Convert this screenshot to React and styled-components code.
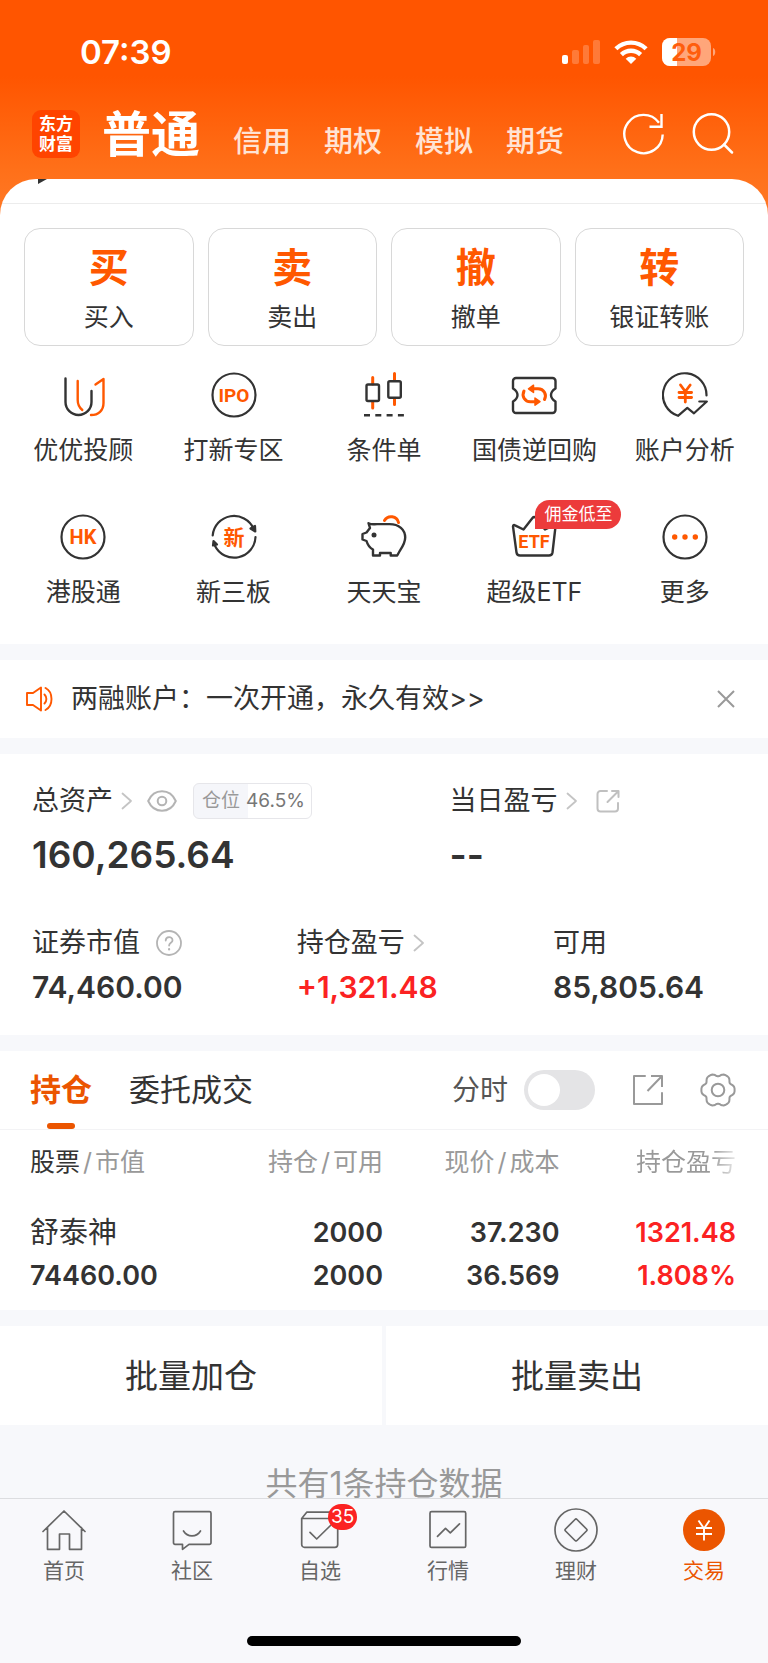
import React, { useState } from "react";
import styled, { createGlobalStyle } from "styled-components";

const ORANGE = "#ff5800";
const DEEP_ORANGE = "#eb5500";
const INK = "#333333";
const RED = "#fb2222";

const GlobalStyle = createGlobalStyle`
  * {
    box-sizing: border-box;
  }
  body {
    margin: 0;
    background: #f7f8fb;
    color: ${INK};
    font-family: Inter, "Noto Sans CJK SC", sans-serif;
  }
  button {
    padding: 0;
    border: none;
    background: none;
    color: inherit;
    font: inherit;
    cursor: pointer;
  }
  a {
    color: inherit;
    text-decoration: none;
  }
  svg {
    display: block;
    flex: none;
  }
`;

const Screen = styled.div`
  display: flex;
  flex-direction: column;
  height: 100vh;
  background: linear-gradient(#ff5500 76px, #ff7019 170px, #ff7a28 220px);
`;

/* header */

const StatusBar = styled.div`
  display: flex;
  align-items: center;
  justify-content: space-between;
  padding: 32px 52px 0 80px;
  color: white;
`;

const Time = styled.span`
  font-size: 33px;
  line-height: 40px;
  font-weight: 600;
`;

const StatusIcons = styled.div`
  display: flex;
  align-items: center;
  gap: 14px;
`;

const NavBar = styled.header`
  display: flex;
  align-items: center;
  height: 107px;
  padding: 16px 34px 0 32px;
  flex: none;
  color: white;
`;

const Logo = styled.a`
  display: flex;
  flex-direction: column;
  align-items: center;
  justify-content: center;
  width: 48px;
  height: 48px;
  border-radius: 9px;
  background: #ff4400;
  font-size: 17px;
  line-height: 20px;
  font-weight: 700;
`;

const AccountTabs = styled.nav`
  display: flex;
  align-items: baseline;
  gap: 33px;
  margin-left: 22px;
  padding-top: 10px;
`;

const AccountTab = styled.button`
  font-size: ${(props) => (props.$active ? "49px" : "29px")};
  line-height: 64px;
  font-weight: ${(props) => (props.$active ? 700 : 500)};
  opacity: ${(props) => (props.$active ? 1 : 0.82)};
`;

const NavActions = styled.div`
  display: flex;
  gap: 27px;
  margin-left: auto;
`;

/* scrolling sheet */

const Sheet = styled.main`
  flex: 1;
  min-height: 0;
  overflow-x: hidden;
  overflow-y: auto;
  scrollbar-width: none;
  border-radius: 36px 36px 0 0;
  background: #f7f8fb;
`;

const Section = styled.section`
  background: white;
  margin-bottom: 16px;
`;

const SheetTop = styled.div`
  height: 25px;
  padding-left: 38px;
  border-bottom: 1px solid #ececec;
`;

const TradeRow = styled.div`
  display: grid;
  grid-template-columns: repeat(4, 1fr);
  gap: 14px;
  padding: 24px 24px 0;
`;

const TradeCard = styled.button`
  display: flex;
  flex-direction: column;
  align-items: center;
  gap: 8px;
  height: 118px;
  padding-top: 14px;
  border: 1px solid #d8d8d8;
  border-radius: 16px;
`;

const TradeGlyph = styled.span`
  color: ${ORANGE};
  font-size: 40px;
  line-height: 50px;
  font-weight: 700;
`;

const Label = styled.span`
  font-size: 25px;
  line-height: 32px;
  white-space: nowrap;
`;

const ToolGrid = styled.div`
  display: grid;
  grid-template-columns: repeat(5, 1fr);
  row-gap: 48px;
  padding: 26px 8px 36px;
`;

const Tool = styled.a`
  display: flex;
  flex-direction: column;
  align-items: center;
  gap: 16px;
`;

const ToolIcon = styled.span`
  position: relative;
`;

const Promo = styled.span`
  position: absolute;
  left: 24px;
  top: -14px;
  padding: 0 9px;
  border-radius: 15px 15px 15px 0;
  background: #ec3b3b;
  color: white;
  font-size: 17px;
  line-height: 29px;
  white-space: nowrap;
`;

const Notice = styled(Section)`
  display: flex;
  align-items: center;
  height: 78px;
  padding: 0 32px 0 25px;
`;

const NoticeText = styled.a`
  flex: 1;
  margin-left: 16px;
  font-size: 27px;
  line-height: 36px;
`;

/* assets */

const Assets = styled(Section)`
  padding: 29px 40px 28px 32px;
`;

const AssetTop = styled.div`
  display: grid;
  grid-template-columns: 3fr 2fr;
`;

const AssetBottom = styled.div`
  display: grid;
  grid-template-columns: 62fr 60fr 41fr;
  margin-top: 46px;
`;

const AssetLabel = styled.div`
  display: flex;
  align-items: center;
  gap: ${(props) => props.$gap || "8px"};
  font-size: 27px;
  line-height: 36px;
  white-space: nowrap;
`;

const IconButton = styled.button`
  margin-left: ${(props) => props.$left || "0"};
`;

const Total = styled.div`
  margin-top: 12px;
  font-size: 37px;
  line-height: 48px;
  font-weight: 600;
`;

const Amount = styled.div`
  margin-top: 6px;
  color: ${(props) => (props.$up ? RED : INK)};
  font-size: 30px;
  line-height: 40px;
  font-weight: 600;
`;

const Ratio = styled.span`
  display: flex;
  align-items: center;
  gap: 6px;
  height: 36px;
  margin-left: 8px;
  padding: 0 6px 0 8px;
  border: 1px solid #e6e6ea;
  border-radius: 6px;
  color: #777777;
  font-size: 19px;
  line-height: 24px;
`;

const RatioName = styled.span`
  color: #999999;
`;

/* holdings */

const TabHeader = styled.div`
  display: flex;
  align-items: center;
  height: 79px;
  padding: 0 32px 0 30px;
  border-bottom: 1px solid #f3f3f5;
`;

const HoldingTab = styled.button`
  display: flex;
  flex-direction: column;
  align-items: center;
  height: 78px;
  margin-right: 37px;
  padding-top: 6px;
  color: ${(props) => (props.$active ? DEEP_ORANGE : INK)};
  font-size: 31px;
  line-height: 66px;
  font-weight: ${(props) => (props.$active ? 700 : 400)};

  &::after {
    content: "";
    width: 28px;
    height: 6px;
    border-radius: 3px;
    background: ${(props) => (props.$active ? DEEP_ORANGE : "transparent")};
  }
`;

const SwitchLabel = styled.label`
  display: flex;
  align-items: center;
  gap: 16px;
  margin-left: auto;
  color: #555555;
  font-size: 28px;
  line-height: 40px;
`;

const Switch = styled.input`
  appearance: none;
  width: 71px;
  height: 40px;
  margin: 0;
  padding: 4px;
  border-radius: 20px;
  background: #e4e4e6;
  cursor: pointer;

  &::before {
    content: "";
    display: block;
    width: 32px;
    height: 32px;
    border-radius: 50%;
    background: white;
  }

  &:checked {
    background: ${DEEP_ORANGE};
  }

  &:checked::before {
    margin-left: auto;
  }
`;

const TableWrap = styled.div`
  padding: 0 32px 13px 30px;
`;

const Table = styled.table`
  width: 100%;
  table-layout: fixed;
  border-collapse: collapse;
  text-align: right;

  th {
    height: 64px;
    padding: 0;
    color: #999999;
    font-size: 25px;
    line-height: 32px;
    font-weight: 400;
    white-space: nowrap;
  }

  td {
    padding: 17px 0 0;
    font-size: 27px;
    line-height: 43px;
    font-weight: 600;
  }

  th:first-child,
  td:first-child {
    text-align: left;
  }
`;

const Dark = styled.span`
  color: ${INK};
`;

const Slash = styled.span`
  margin: 0 3px;
`;

const Fading = styled.span`
  background: linear-gradient(90deg, #999999 75%, #e8e8e8);
  background-clip: text;
  color: transparent;
`;

const Line = styled.span`
  display: block;
  color: ${(props) => (props.$up ? RED : INK)};
`;

const StockName = styled(Line)`
  font-size: 29px;
  font-weight: 400;
`;

const BatchRow = styled.div`
  display: grid;
  grid-template-columns: 1fr 1fr;
  gap: 4px;
`;

const BatchButton = styled.button`
  height: 99px;
  background: white;
  font-size: 33px;
  line-height: 48px;
`;

const Hint = styled.p`
  margin: 0;
  padding: 38px 0;
  color: #999999;
  font-size: 32px;
  line-height: 42px;
  text-align: center;
`;

/* bottom bar */

const BottomBar = styled.footer`
  flex: none;
  padding: 9px 0 17px;
  border-top: 1px solid #dcdde0;
  background: #f8f8fb;
`;

const BottomNav = styled.nav`
  display: grid;
  grid-template-columns: repeat(6, 1fr);
`;

const BottomItem = styled.a`
  display: flex;
  flex-direction: column;
  align-items: center;
  gap: 6px;
  color: ${(props) => (props.$active ? DEEP_ORANGE : "#666666")};
  font-size: 21px;
  line-height: 26px;
`;

const Count = styled.span`
  position: absolute;
  left: 30px;
  top: -4px;
  padding: 0 3px;
  border-radius: 13px;
  background: ${RED};
  color: white;
  font-size: 19px;
  line-height: 26px;
`;

const HomeIndicator = styled.div`
  width: 274px;
  height: 10px;
  margin: 52px auto 0;
  border-radius: 5px;
  background: black;
`;

/* icons */

const Svg = ({ w = 46, h = w, sw = 2.4, color = INK, children }) => (
  <svg
    width={w}
    height={h}
    viewBox={`0 0 ${w} ${h}`}
    fill="none"
    stroke={color}
    strokeWidth={sw}
    strokeLinecap="round"
    strokeLinejoin="round"
    aria-hidden="true"
  >
    {children}
  </svg>
);

const IconText = ({ x = 23, y, size, children }) => (
  <text
    x={x}
    y={y}
    fill={ORANGE}
    stroke="none"
    textAnchor="middle"
    fontFamily='Roboto, "Noto Sans CJK SC", sans-serif'
    fontSize={size}
    fontWeight="700"
  >
    {children}
  </text>
);

const Signal = () => (
  <svg width="38" height="24" viewBox="0 0 38 24" fill="white" aria-hidden="true">
    <rect x="0" y="15" width="6" height="9" rx="2" />
    <g opacity="0.22">
      <rect x="10" y="10" width="7" height="14" rx="2" />
      <rect x="21" y="5" width="6" height="19" rx="2" />
      <rect x="31" y="0" width="7" height="24" rx="2" />
    </g>
  </svg>
);

const Wifi = () => (
  <svg width="34" height="24" viewBox="0 0 34 24" fill="none" stroke="white" strokeWidth="4.4" aria-hidden="true">
    <path d="M1.9 8.8a21.6 21.6 0 0 1 30.2 0" />
    <path d="M7.4 14.6a13.8 13.8 0 0 1 19.2 0" />
    <path d="M17 24l-5.3-5.3a7.6 7.6 0 0 1 10.6 0z" fill="white" stroke="none" />
  </svg>
);

const Battery = () => (
  <svg width="54" height="28" viewBox="0 0 54 28" aria-hidden="true">
    <rect width="49" height="28" rx="8" fill="white" opacity="0.48" />
    <path d="M8 0h7v28H8a8 8 0 0 1-8-8V8a8 8 0 0 1 8-8z" fill="white" />
    <path d="M51 10c3 1 3 7 0 8z" fill="white" opacity="0.48" />
    <text x="24.5" y="22.5" textAnchor="middle" fill="#ff5d0c" fontSize="24" fontWeight="700">
      29
    </text>
  </svg>
);

const Refresh = () => (
  <Svg w={42} sw={2.4} color="white">
    <path d="M36 9.700A19.200 19.200 0 1 0 39.700 21.500" strokeLinecap="butt" />
    <path d="M38.500 1v12.800H26.500" strokeLinecap="butt" strokeLinejoin="miter" />
  </Svg>
);

const Search = () => (
  <Svg w={42} sw={2.5} color="white">
    <circle cx="19.5" cy="19" r="17.7" />
    <path d="M32 31.5l8 8" />
  </Svg>
);

const YouIcon = () => (
  <Svg>
    <path d="M5.5 6.5V30a13 13 0 0 0 26 0V19" />
    <g stroke={ORANGE}>
      <path d="M17.7 9v19c0 4.500 1.500 7.500 4.600 10" />
      <path d="M35.5 12.5l8-5.500v24c0 7.500-5 12-12.500 12" />
    </g>
  </Svg>
);

const IpoIcon = () => (
  <Svg sw={2.2}>
    <circle cx="23" cy="23" r="21.5" />
    <IconText y={29.5} size={19}>IPO</IconText>
  </Svg>
);

const CandleIcon = () => (
  <Svg>
    <path d="M11.7 5.500v6.500M11.700 30v6M33.500 1.500v7M33.500 26.500v6" stroke={ORANGE} strokeWidth="3" />
    <rect x="5.5" y="12.5" width="12.5" height="16.5" rx="1.5" />
    <rect x="27.3" y="9.3" width="12.5" height="16.5" rx="1.5" />
    <path d="M3 43.2h40" strokeDasharray="6 5.3" strokeLinecap="butt" />
  </Svg>
);

const TicketIcon = () => (
  <Svg>
    <path d="M5 6h36.500a3 3 0 0 1 3 3v7.500c-2.500 1.500-4.500 3.500-4.500 6.500s2 5 4.500 6.500V38a3 3 0 0 1-3 3H5a3 3 0 0 1-3-3v-8.500c2.500-1.500 4.500-3.500 4.500-6.500S4.500 18 2 16.500V9a3 3 0 0 1 3-3z" />
    <g stroke={ORANGE} strokeWidth="3">
      <path d="M22 16.800h5c6 0 9 5.700 6.500 10.700" />
      <path d="M24.500 29.700h-5c-6 0-9-5.700-6.500-10.700" />
      <path d="M22.500 13.200v7.200l-5-3.600z" fill={ORANGE} strokeWidth="1.5" />
      <path d="M24 26v7.200l5-3.600z" fill={ORANGE} strokeWidth="1.5" />
    </g>
  </Svg>
);

const AnalysisIcon = () => (
  <Svg sw={2.2}>
    <path d="M44.500 23.500A21.800 21.800 0 1 0 16 43.800l9.300-8 6.700 5.500 12.800-11.800h-7.500" />
    <path d="M18.500 13l4.800 6.500L28.200 13M23.300 19.500V30M17 20.500h12.600M17 25.500h12.600" stroke={ORANGE} strokeWidth="2.8" />
  </Svg>
);

const HkIcon = () => (
  <Svg sw={2.2}>
    <circle cx="23" cy="23" r="21.5" />
    <IconText y={30} size={20}>HK</IconText>
  </Svg>
);

const NewIcon = () => (
  <Svg sw={2.2}>
    <path d="M1.700 21.500A21.400 21.400 0 0 1 42.500 14.500" />
    <path d="M44.500 23A21.400 21.400 0 0 1 3.800 31.500" />
    <path d="M39.500 14.500l4.500-2.500.3 5.500z" fill={INK} />
    <path d="M2 31.500l.5-4.500 3.500 3.500z" fill={INK} />
    <IconText y={30.5} size={21}>新</IconText>
  </Svg>
);

const PiggyIcon = () => (
  <Svg>
    <path d="M7.500 9.200c3.500 1.800 5.500.8 9 .9h12c9.500 0 15.700 5.500 15.700 13.500 0 5.500-2.500 9-5.500 13.400l-2.500 4.500h-6.500v-2.500H19v2.500h-7v-6c-3.500-1.800-5.500-5-6.500-8.500l-4-1.500v-5.500l4-1.500 3.500-4.500z" />
    <path d="M23.500 6.500c3.500-6 12.500-4.500 14 2" stroke={ORANGE} strokeWidth="3" />
    <circle cx="13" cy="21" r="2.5" fill={INK} stroke="none" />
  </Svg>
);

const EtfIcon = () => (
  <Svg>
    <path d="M2 12.500c0-1.500 1-1.800 2-1.200l8.500 4.200L21.500 4c1-1.300 2.500-1.300 3.500 0l9 11.500 8.500-4.200c1-.5 2 0 2 1.200l-3 26c-.3 2-1.500 3-3.500 3h-29c-2 0-3.200-1-3.500-3z" />
    <IconText y={33.5} size={18}>ETF</IconText>
  </Svg>
);

const MoreIcon = () => (
  <Svg sw={2.2}>
    <circle cx="23" cy="23" r="21.5" />
    <g fill={ORANGE} stroke="none">
      <circle cx="12.7" cy="23" r="2.7" />
      <circle cx="23" cy="23" r="2.7" />
      <circle cx="33.3" cy="23" r="2.7" />
    </g>
  </Svg>
);

const Speaker = () => (
  <Svg w={30} h={26} sw={1.9} color={ORANGE}>
    <path d="M2 7h6l8-5.500v23L8 19H2zM19.500 8.500c2.500 2.500 2.500 6.500 0 9M20.500 2c8 4 8 18 0 22" />
  </Svg>
);

const Close = () => (
  <Svg w={20} sw={2} color="#999999">
    <path d="M2 2l16 16M18 2L2 18" strokeLinecap="butt" />
  </Svg>
);

const Chevron = () => (
  <Svg w={12} h={18} sw={1.8} color="#c4c4c4">
    <path d="M1.500 1.500L10 9l-8.500 7.500" />
  </Svg>
);

const Eye = () => (
  <Svg w={30} h={22} sw={2} color="#b4b4b4">
    <path d="M1.200 11C7-2 23-2 28.800 11 23 24 7 24 1.200 11z" />
    <circle cx="15" cy="11" r="4.3" />
  </Svg>
);

const Question = () => (
  <Svg w={26} sw={1.8} color="#b4b4b4">
    <circle cx="13" cy="13" r="12" />
    <path d="M9.700 10.500c0-4.500 6.800-4.500 6.800-.3 0 2.600-3.400 2.600-3.400 5.400" />
    <path d="M13.100 19.200v.2" strokeWidth="2.2" />
  </Svg>
);

const ShareSmall = () => (
  <Svg w={24} sw={2} color="#c0c0c0">
    <path d="M11 2H4.500A3 3 0 0 0 1.500 5v14.500a3 3 0 0 0 3 3H19a3 3 0 0 0 3-3V14" />
    <path d="M16 2h6.500v6M22 2.500L11.500 13" />
  </Svg>
);

const Share = () => (
  <Svg w={32} sw={2} color="#999999">
    <path d="M13 2H2v28h28V19" />
    <path d="M19 2h11v11M29.500 2.500L15.500 17" strokeLinecap="butt" />
  </Svg>
);

// six soft lobes round a ring
const gearPath = Array.from({ length: 72 }, (_, i) => {
  const a = (i / 72) * Math.PI * 2;
  const r = 15.5 + 1.5 * Math.cos(6 * a) - 0.4 * Math.cos(12 * a);
  return `${i ? "L" : "M"}${(18 + r * Math.cos(a)).toFixed(2)} ${(18 + r * Math.sin(a)).toFixed(2)}`;
}).join("") + "Z";

const Gear = () => (
  <Svg w={36} sw={2} color="#999999">
    <path d={gearPath} />
    <circle cx="18" cy="18" r="6.3" />
  </Svg>
);

const HomeIcon = () => (
  <Svg w={44} sw={1.7} color="#666666">
    <path d="M1 23.500L22 3l21 20.500M5.500 19.500v21.800h12V26h10v15.300h12V19.500" />
  </Svg>
);

const ChatIcon = () => (
  <Svg w={44} sw={1.7} color="#666666">
    <path d="M5 3.700h34.500a1.500 1.500 0 0 1 1.500 1.500v29.600a1.500 1.500 0 0 1-1.500 1.500H19l-6.500 5v-5H5a1.500 1.500 0 0 1-1.500-1.500V5.200A1.500 1.500 0 0 1 5 3.700z" />
    <path d="M13.500 23c4 6.500 13 6.500 17 0" />
  </Svg>
);

const PickIcon = () => (
  <Svg w={44} sw={1.7} color="#666666">
    <path d="M3.700 10.500h36v26a2.800 2.800 0 0 1-2.800 2.800H6.500a2.800 2.800 0 0 1-2.800-2.800zM3.700 10.500l5-6.300h28l3 6.300" />
    <path d="M12 24.300l6.700 6.700L33 17" />
  </Svg>
);

const MarketIcon = () => (
  <Svg w={44} sw={1.7} color="#666666">
    <rect x="4" y="3.7" width="35.7" height="35.7" rx="1.5" />
    <path d="M11.500 28.300l8-8 4.800 4.500 9.200-9" />
  </Svg>
);

const WealthIcon = () => (
  <Svg w={44} sw={1.7} color="#666666">
    <circle cx="22" cy="22" r="21" />
    <path d="M21 11.500q1-1 2 0l9.500 9.500q1 1 0 2L23 32.500q-1 1-2 0L11.500 23q-1-1 0-2z" />
  </Svg>
);

const TradeIcon = () => (
  <Svg w={44} sw={1.9} color="white">
    <circle cx="22" cy="22" r="21" fill={DEEP_ORANGE} stroke="none" />
    <path d="M16.500 12.500l5.500 8 5.500-8M22 20.500v12M14 20h16M14 26h16" strokeLinecap="butt" />
  </Svg>
);

const accounts = ["普通", "信用", "期权", "模拟", "期货"];

const trades = [
  { glyph: "买", label: "买入" },
  { glyph: "卖", label: "卖出" },
  { glyph: "撤", label: "撤单" },
  { glyph: "转", label: "银证转账" },
];

const tools = [
  { label: "优优投顾", Icon: YouIcon },
  { label: "打新专区", Icon: IpoIcon },
  { label: "条件单", Icon: CandleIcon },
  { label: "国债逆回购", Icon: TicketIcon },
  { label: "账户分析", Icon: AnalysisIcon },
  { label: "港股通", Icon: HkIcon },
  { label: "新三板", Icon: NewIcon },
  { label: "天天宝", Icon: PiggyIcon },
  { label: "超级ETF", Icon: EtfIcon, promo: "佣金低至" },
  { label: "更多", Icon: MoreIcon },
];

const holdings = [
  {
    name: "舒泰神",
    value: "74460.00",
    held: "2000",
    usable: "2000",
    price: "37.230",
    cost: "36.569",
    profit: "1321.48",
    rate: "1.808%",
  },
];

const bottomItems = [
  { label: "首页", Icon: HomeIcon },
  { label: "社区", Icon: ChatIcon },
  { label: "自选", Icon: PickIcon, count: 35 },
  { label: "行情", Icon: MarketIcon },
  { label: "理财", Icon: WealthIcon },
  { label: "交易", Icon: TradeIcon },
];

const App = () => {
  const [account, setAccount] = useState("普通");
  const [tab, setTab] = useState("持仓");
  const [timeShare, setTimeShare] = useState(false);
  const position = 46.5;

  return (
    <Screen>
      <GlobalStyle />
      <StatusBar>
        <Time>07:39</Time>
        <StatusIcons>
          <Signal />
          <Wifi />
          <Battery />
        </StatusIcons>
      </StatusBar>
      <NavBar>
        <Logo href="#">
          <span>东方</span>
          <span>财富</span>
        </Logo>
        <AccountTabs>
          {accounts.map((item) => (
            <AccountTab key={item} $active={item === account} onClick={() => setAccount(item)}>
              {item}
            </AccountTab>
          ))}
        </AccountTabs>
        <NavActions>
          <IconButton aria-label="刷新"><Refresh /></IconButton>
          <IconButton aria-label="搜索"><Search /></IconButton>
        </NavActions>
      </NavBar>

      <Sheet>
        <Section>
          <SheetTop>
            <svg width="10" height="6" viewBox="0 0 10 6" aria-hidden="true">
              <path d="M0 0h9L0 5z" fill={INK} />
            </svg>
          </SheetTop>
          <TradeRow>
            {trades.map((item) => (
              <TradeCard key={item.label}>
                <TradeGlyph>{item.glyph}</TradeGlyph>
                <Label>{item.label}</Label>
              </TradeCard>
            ))}
          </TradeRow>
          <ToolGrid>
            {tools.map(({ label, Icon, promo }) => (
              <Tool key={label} href="#">
                <ToolIcon>
                  <Icon />
                  {promo && <Promo>{promo}</Promo>}
                </ToolIcon>
                <Label>{label}</Label>
              </Tool>
            ))}
          </ToolGrid>
        </Section>

        <Notice>
          <Speaker />
          <NoticeText href="#">两融账户：一次开通，永久有效&gt;&gt;</NoticeText>
          <IconButton aria-label="关闭"><Close /></IconButton>
        </Notice>

        <Assets>
          <AssetTop>
            <div>
              <AssetLabel>
                总资产
                <Chevron />
                <IconButton $left="6px" aria-label="隐藏金额"><Eye /></IconButton>
                <Ratio
                  style={{ background: `linear-gradient(90deg, #f5f6fa ${position}%, white ${position}%)` }}
                >
                  <RatioName>仓位</RatioName>
                  {position}%
                </Ratio>
              </AssetLabel>
              <Total>160,265.64</Total>
            </div>
            <div>
              <AssetLabel>
                当日盈亏
                <Chevron />
                <IconButton $left="10px" aria-label="分享"><ShareSmall /></IconButton>
              </AssetLabel>
              <Total>--</Total>
            </div>
          </AssetTop>
          <AssetBottom>
            <div>
              <AssetLabel $gap="16px">
                证券市值
                <IconButton aria-label="说明"><Question /></IconButton>
              </AssetLabel>
              <Amount>74,460.00</Amount>
            </div>
            <div>
              <AssetLabel>
                持仓盈亏
                <Chevron />
              </AssetLabel>
              <Amount $up>+1,321.48</Amount>
            </div>
            <div>
              <AssetLabel>可用</AssetLabel>
              <Amount>85,805.64</Amount>
            </div>
          </AssetBottom>
        </Assets>

        <Section>
          <TabHeader>
            {["持仓", "委托成交"].map((item) => (
              <HoldingTab key={item} $active={item === tab} onClick={() => setTab(item)}>
                {item}
              </HoldingTab>
            ))}
            <SwitchLabel>
              分时
              <Switch
                type="checkbox"
                checked={timeShare}
                onChange={(e) => setTimeShare(e.target.checked)}
              />
            </SwitchLabel>
            <IconButton $left="37px" aria-label="导出"><Share /></IconButton>
            <IconButton $left="36px" aria-label="设置"><Gear /></IconButton>
          </TabHeader>
          <TableWrap>
            <Table>
              <thead>
                <tr>
                  <th><Dark>股票</Dark><Slash>/</Slash>市值</th>
                  <th>持仓<Slash>/</Slash>可用</th>
                  <th>现价<Slash>/</Slash>成本</th>
                  <th><Fading>持仓盈亏</Fading></th>
                </tr>
              </thead>
              <tbody>
                {holdings.map((row) => (
                  <tr key={row.name}>
                    <td>
                      <StockName>{row.name}</StockName>
                      <Line>{row.value}</Line>
                    </td>
                    <td>
                      <Line>{row.held}</Line>
                      <Line>{row.usable}</Line>
                    </td>
                    <td>
                      <Line>{row.price}</Line>
                      <Line>{row.cost}</Line>
                    </td>
                    <td>
                      <Line $up>{row.profit}</Line>
                      <Line $up>{row.rate}</Line>
                    </td>
                  </tr>
                ))}
              </tbody>
            </Table>
          </TableWrap>
        </Section>

        <BatchRow>
          <BatchButton>批量加仓</BatchButton>
          <BatchButton>批量卖出</BatchButton>
        </BatchRow>
        <Hint>共有1条持仓数据</Hint>
      </Sheet>

      <BottomBar>
        <BottomNav>
          {bottomItems.map(({ label, Icon, count }) => (
            <BottomItem key={label} href="#" $active={label === "交易"}>
              <ToolIcon>
                <Icon />
                {count && <Count>{count}</Count>}
              </ToolIcon>
              {label}
            </BottomItem>
          ))}
        </BottomNav>
        <HomeIndicator />
      </BottomBar>
    </Screen>
  );
};

export default App;
